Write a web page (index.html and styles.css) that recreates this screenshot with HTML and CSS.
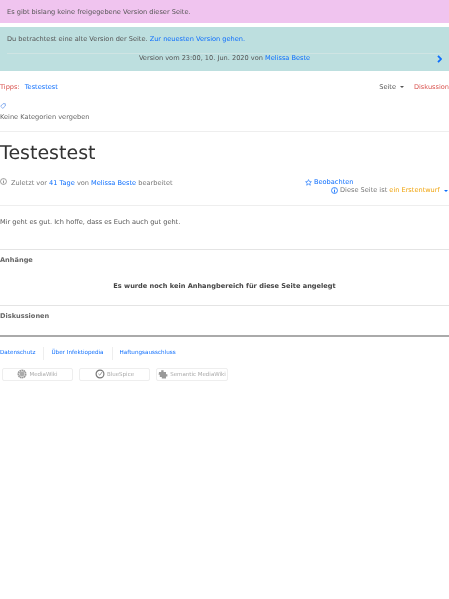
FILE: index.html
```html
<!DOCTYPE html>
<html lang="de">
<head>
<meta charset="utf-8">
<title>Testestest</title>
<link rel="stylesheet" href="styles.css">
</head>
<body>
<div class="alert alert-pink">Es gibt bislang keine freigegebene Version dieser Seite.</div>
<div class="alert alert-teal">
  <div class="alert-line">Du betrachtest eine alte Version der Seite. <a href="#">Zur neuesten Version gehen.</a></div>
  <div class="version-row">
    <span class="version-text">Version vom 23:00, 10. Jun. 2020 von <a href="#">Melissa Beste</a></span>
    <svg class="chev" width="5" height="8" viewBox="0 0 5 8"><path d="M1 .8 4 4 1 7.2" fill="none" stroke="#0d6efd" stroke-width="1.8"/></svg>
  </div>
</div>
<nav class="tabs">
  <div class="tabs-left"><span class="red">Tipps:</span><a href="#">Testestest</a></div>
  <div class="tabs-right"><span class="seite">Seite<i class="caret"></i></span><span class="red">Diskussion</span></div>
</nav>
<div class="cats">
  <svg class="tag" width="6" height="6" viewBox="0 0 6 6"><path d="M3 .7H5.3V3L2.8 5.4.7 3.3Z" fill="none" stroke="#5a8fe8" stroke-width=".7"/></svg>
  <div>Keine Kategorien vergeben</div>
</div>
<h1>Testestest</h1>
<div class="meta">
  <div class="meta-left">
    <svg width="7" height="7" viewBox="0 0 8 8"><circle cx="4" cy="4" r="3.4" fill="none" stroke="#666" stroke-width=".7"/><path d="M4 3.4V6M4 2V2.8" stroke="#666" stroke-width=".8"/></svg>
    <span>Zuletzt vor <a href="#">41 Tage</a> von <a href="#">Melissa Beste</a> bearbeitet</span>
  </div>
  <div class="meta-right">
    <div class="watch"><svg width="7" height="7" viewBox="0 0 8 8"><path d="M4 .7 5 2.9 7.3 3.1 5.5 4.7 6.1 7.1 4 5.8 1.9 7.1 2.5 4.7.7 3.1 3 2.9Z" fill="none" stroke="#0d6efd" stroke-width=".7"/></svg><a href="#">Beobachten</a></div>
    <div class="draft"><svg width="7" height="7" viewBox="0 0 8 8"><circle cx="4" cy="4" r="3.4" fill="none" stroke="#0d6efd" stroke-width=".9"/><path d="M4 3.4V6.4M4 1.8V2.7" stroke="#0d6efd" stroke-width="1"/></svg><span>Diese Seite ist <span class="orange">ein Erstentwurf</span></span><i class="caret caret-blue"></i></div>
  </div>
</div>
<p class="content">Mir geht es gut. Ich hoffe, dass es Euch auch gut geht.</p>
<section class="attach">
  <h2>Anhänge</h2>
  <p class="empty">Es wurde noch kein Anhangbereich für diese Seite angelegt</p>
</section>
<section class="discuss"><h2>Diskussionen</h2></section>
<footer>
  <div class="links"><a href="#">Datenschutz</a><a href="#">Über Infektiopedia</a><a href="#">Haftungsausschluss</a></div>
  <div class="badges">
    <span class="badge b1"><svg width="10" height="10" viewBox="0 0 10 10"><circle cx="5" cy="5" r="3.6" fill="none" stroke="#999" stroke-width="1.8" stroke-dasharray="1.6 .4"/><circle cx="5" cy="5" r="2.4" fill="#aaa"/></svg>MediaWiki</span>
    <span class="badge b2"><svg width="10" height="10" viewBox="0 0 10 10"><circle cx="5" cy="5" r="3.9" fill="none" stroke="#777" stroke-width="1.2"/><path d="M3.4 4.8 4.8 6.2 7.4 2.6" fill="none" stroke="#999" stroke-width="1"/></svg>BlueSpice</span>
    <span class="badge b3"><svg width="10" height="10" viewBox="0 0 10 10"><path d="M1 3H3.2V1.2H5.6V3H8V5.2H9.4V7.4H8V9.4H3.8V8H1.8V5.8H.6Z" fill="#999"/></svg>Semantic MediaWiki</span>
  </div>
</footer>
</body>
</html>
```
FILE: styles.css
```css
* { box-sizing: border-box; }
html, body { margin: 0; padding: 0; background: #fff; }
body {
  font-family: "DejaVu Sans", sans-serif;
  font-size: 6.6px;
  line-height: 13px;
  color: #555;
  overflow-x: hidden;
  text-rendering: geometricPrecision;
  filter: blur(.35px);
  min-height: 599px;
}
a { color: #0d6efd; text-decoration: none; }
.alert { padding: 6px 7px; color: #555; }
.alert-pink { height: 23px; background: #f0c4ef; margin-bottom: 4px; }
.alert-teal { height: 44px; background: #bddfdf; padding-bottom: 0; }
.alert-line { height: 20px; }
.version-row {
  position: relative;
  border-top: 1px solid #cfe4e3;
  line-height: 9px;
  display: flex;
  justify-content: center;
}
.chev { position: absolute; right: 0; top: 1px; }
.tabs { display: flex; justify-content: space-between; margin-top: 10px; height: 11px; white-space: nowrap; }
.tabs-left { display: flex; gap: 5px; }
.tabs-right { display: flex; gap: 10px; }
.red { color: #d9534f; }
.caret { display: inline-block; width: 0; height: 0; border: 2px solid transparent; border-top-color: #555; border-bottom: 0; margin-left: 4px; vertical-align: 1.5px; }
.caret-blue { border-top-color: #0d6efd; margin-left: 2px; }
.cats { margin-top: 11px; height: 29px; border-bottom: 1px solid #eee; color: #666; }
.tag { display: block; margin: 0 0 2px 0; }
h1 { font-size: 19px; font-weight: 400; line-height: 24px; margin: 9px 0 0; color: #333; }
.meta { display: flex; justify-content: space-between; margin-top: 11px; height: 30px; border-bottom: 1px solid #eee; color: #777; }
.meta-left { display: flex; gap: 4px; align-items: flex-start; padding-top: 1px; }
.meta-left svg { margin-top: 1px; }
.meta-right { display: flex; flex-direction: column; align-items: flex-start; width: 146px; }
.watch { display: flex; gap: 2px; align-items: center; margin-left: 2px; height: 8px; margin-top: 2px; }
.draft { display: flex; align-items: center; gap: 2px; margin-left: 28px; height: 9px; white-space: nowrap; }
.orange { color: #f0a30a; }
.content { margin: 10px 0 0; height: 34px; border-bottom: 1px solid #e4e4e4; }
h2 { font-size: 6.6px; font-weight: 700; margin: 0; color: #666; line-height: 13px; }
.attach { padding-top: 4px; height: 56px; border-bottom: 1px solid #e4e4e4; }
.empty { margin: 13px 0 0; text-align: center; font-weight: 700; color: #444; }
.discuss { padding-top: 4px; height: 31px; border-bottom: 2px solid #aaa; }
footer { margin-top: 10px; }
.links { display: flex; font-size: 5.65px; height: 13px; line-height: 13px; }
.links a { padding-right: 8px; margin-right: 7px; border-right: 1px solid #eee; }
.links a:last-child { border: 0; }
.badges { display: flex; gap: 6px; margin-top: 8px; margin-left: 2px; font-size: 5.5px; line-height: 9px; color: #aaa; }
.badge { display: flex; align-items: center; justify-content: center; gap: 2px; height: 13px; padding-top: 2px; border: 1px solid #eee; border-radius: 2px; }
.badge svg { margin-bottom: 3px; }
.b1 { width: 71px; }
.b2 { width: 71px; }
.b3 { width: 72px; }
```
